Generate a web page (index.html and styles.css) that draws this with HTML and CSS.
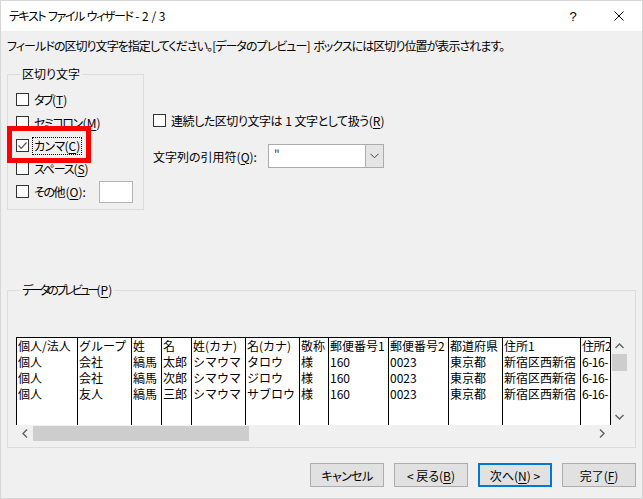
FILE: index.html
```html
<!DOCTYPE html>
<html lang="ja">
<head>
<meta charset="utf-8">
<title>テキスト ファイル ウィザード</title>
<link rel="stylesheet" href="styles.css">
</head>
<body>
<div class="window">
  <div class="titlebar">
    <span class="title"><span class="k14">テキスト</span> <span class="k14">ファイル</span> <span class="k14">ウィザード</span> - 2 / 3</span>
    <span class="tbtn help">?</span>
    <span class="tbtn close"><svg width="10" height="10" viewBox="0 0 10 10"><path d="M0.5 0.5 L9.5 9.5 M9.5 0.5 L0.5 9.5" stroke="#000" stroke-width="1" fill="none"/></svg></span>
  </div>
  <div class="content">
    <p class="instr">フィールドの区切り文字を指定してください。[データのプレビュー] ボックスには区切り位置が表示されます。</p>
    <div class="top">
      <div class="group delims">
        <div class="legend">区切り文字</div>
        <div class="crow"><span class="cb"></span><span class="lbl"><span class="k15">タブ</span>(<u>T</u>)</span></div>
        <div class="crow"><span class="cb"></span><span class="lbl"><span class="k15 tail">セミコロン</span>(<u>M</u>)</span></div>
        <div class="crow"><span class="cb checked"><svg width="11" height="11" viewBox="0 0 11 11"><path d="M1.5 5.5 L4.2 8.3 L9.5 2.5" stroke="#555" stroke-width="1.2" fill="none"/></svg></span><span class="lbl focus"><span class="k07">カンマ</span>(<u>C</u>)</span></div>
        <div class="crow"><span class="cb"></span><span class="lbl"><span class="k12">スペース</span>(<u>S</u>)</span></div>
        <div class="crow"><span class="cb"></span><span class="lbl"><span class="k15">その</span>他(<u>O</u>):</span><span class="tbox"></span></div>
        <div class="redmark"></div>
      </div>
      <div class="options">
        <div class="crow"><span class="cb"></span><span class="lbl"><span class="renzoku">連続した区切り文字は 1 文字として扱う</span>(<u>R</u>)</span></div>
        <div class="qrow">
          <span class="qlbl">文字列の引用符(<u>Q</u>):</span>
          <span class="combo"><span class="cval">"</span><span class="cdrop"><svg width="9" height="6" viewBox="0 0 9 6"><path d="M0.5 0.8 L4.5 4.8 L8.5 0.8" stroke="#444" stroke-width="1" fill="none"/></svg></span></span>
        </div>
      </div>
    </div>
    <div class="group preview">
      <div class="legend"><span class="k28">データのプレビュー</span>(<u>P</u>)</div>
      <div class="pbox">
        <div class="data">
          <div class="col w61"><div>個人/法人</div><div>個人</div><div>個人</div><div>個人</div></div>
          <div class="col w54"><div>グループ</div><div>会社</div><div>会社</div><div>友人</div></div>
          <div class="col w30"><div>姓</div><div>縞馬</div><div>縞馬</div><div>縞馬</div></div>
          <div class="col w30"><div>名</div><div>太郎</div><div>次郎</div><div>三郎</div></div>
          <div class="col w54"><div>姓(カナ)</div><div>シマウマ</div><div>シマウマ</div><div>シマウマ</div></div>
          <div class="col w54"><div>名(カナ)</div><div>タロウ</div><div>ジロウ</div><div>サブロウ</div></div>
          <div class="col w29"><div>敬称</div><div>様</div><div>様</div><div>様</div></div>
          <div class="col w60"><div>郵便番号1</div><div>160</div><div>160</div><div>160</div></div>
          <div class="col w60"><div>郵便番号2</div><div>0023</div><div>0023</div><div>0023</div></div>
          <div class="col w54"><div>都道府県</div><div>東京都</div><div>東京都</div><div>東京都</div></div>
          <div class="col w78"><div>住所1</div><div>新宿区西新宿</div><div>新宿区西新宿</div><div>新宿区西新宿</div></div>
          <div class="col last"><div>住所2</div><div>6-16-</div><div>6-16-</div><div>6-16-</div></div>
        </div>
        <div class="vscroll">
          <span class="arr"><svg width="9" height="6" viewBox="0 0 9 6"><path d="M0.5 5 L4.5 1 L8.5 5" stroke="#606060" stroke-width="1.4" fill="none"/></svg></span>
          <span class="vthumb"></span>
          <span class="vfill"></span>
          <span class="arr"><svg width="9" height="6" viewBox="0 0 9 6"><path d="M0.5 1 L4.5 5 L8.5 1" stroke="#606060" stroke-width="1.4" fill="none"/></svg></span>
        </div>
        <div class="hscroll">
          <span class="harr"><svg width="6" height="9" viewBox="0 0 6 9"><path d="M5 0.5 L1 4.5 L5 8.5" stroke="#606060" stroke-width="1.4" fill="none"/></svg></span>
          <span class="hthumb"></span>
          <span class="hfill"></span>
          <span class="harr"><svg width="6" height="9" viewBox="0 0 6 9"><path d="M1 0.5 L5 4.5 L1 8.5" stroke="#606060" stroke-width="1.4" fill="none"/></svg></span>
        </div>
        <div class="corner"></div>
      </div>
    </div>
    <div class="buttons">
      <button class="btn"><span class="k06">キャンセル</span></button>
      <button class="btn">&lt; 戻る(<u>B</u>)</button>
      <button class="btn default">次へ(<u>N</u>) &gt;</button>
      <button class="btn">完了(<u>F</u>)</button>
    </div>
  </div>
</div>
</body>
</html>
```

FILE: styles.css
```css
* { box-sizing: border-box; }
html, body { margin: 0; padding: 0; }
body {
  font-family: "Noto Sans CJK JP", "Noto Sans", sans-serif;
  font-size: 12px;
  color: #000;
  background: #f0f0f0;
}
u { text-decoration: underline; text-underline-offset: 2px; }
.window {
  width: 643px;
  height: 499px;
  border: 1px solid #d6d6d6;
  background: #f0f0f0;
  display: flex;
  flex-direction: column;
  overflow: hidden;
}
.titlebar {
  height: 30px;
  background: #fff;
  display: flex;
  align-items: center;
  padding-left: 8px;
  flex: none;
}
.title { flex: 1; font-feature-settings: "palt"; line-height: 16px; white-space: pre; }
.tbtn {
  width: 46px;
  height: 30px;
  display: flex;
  align-items: center;
  justify-content: center;
  font-size: 13px;
}
.help { font-family: "Liberation Sans", sans-serif; }
.content { padding: 0 5px 0 6px; flex: 1; display: flex; flex-direction: column; }
.instr {
  margin: 7px 0 0 0;
  line-height: 16px;
  font-feature-settings: "palt";
  letter-spacing: -0.95px;
  word-spacing: 2px;
  white-space: nowrap;
}
.k06 { letter-spacing: -0.6px; }
.k07 { letter-spacing: -0.7px; }
.k12 { letter-spacing: -1.2px; }
.k14 { letter-spacing: -1.4px; }
.k15 { letter-spacing: -1.5px; }
.k28 { letter-spacing: -2.8px; }
.tail { padding-right: 1px; }
.renzoku { letter-spacing: -0.45px; word-spacing: 0.9px; }
.top { display: flex; margin-top: 20px; }
.group {
  border: 1px solid #dcdcdc;
  position: relative;
}
.legend {
  display: table;
  margin: -9px 0 0 4px;
  padding: 0 2px;
  line-height: 16px;
  background: #f0f0f0;
  font-feature-settings: "palt";
  white-space: nowrap;
}
.delims {
  width: 137px;
  height: 136px;
  padding-left: 8px;
}
.delims .legend { margin-bottom: 6px; }
.crow {
  height: 23px;
  display: flex;
  align-items: center;
  white-space: nowrap;
}
.cb {
  width: 13px;
  height: 13px;
  border: 1px solid #333;
  background: #fff;
  flex: none;
  display: flex;
  align-items: center;
  justify-content: center;
}
.lbl {
  margin-left: 3px;
  padding: 0 1px;
  line-height: 16px;
  font-feature-settings: "palt";
  border: 1px solid transparent;
}
.lbl.focus { border: 1px dotted #000; }
.tbox {
  width: 34px;
  height: 22px;
  margin-left: 11px;
  background: #fff;
  border: 1px solid #b4b4b4;
}
.redmark {
  position: absolute;
  left: -1px;
  top: 51px;
  width: 84px;
  height: 37px;
  border: 5px solid #ff0000;
}
.options {
  padding-top: 35px;
  margin-left: 9px;
}
.qrow {
  display: flex;
  align-items: center;
  margin-top: 12px;
  height: 24px;
}
.qlbl { font-feature-settings: "palt"; width: 115px; }
.combo {
  width: 116px;
  height: 24px;
  background: #fff;
  border: 1px solid #acacac;
  display: flex;
}
.cval { flex: 1; padding-left: 5px; line-height: 20px; color: #4b2170; }
.cdrop {
  width: 18px;
  background: #e5e5e5;
  border-left: 1px solid #acacac;
  display: flex;
  align-items: center;
  justify-content: center;
}
.preview {
  margin-top: 80px;
  width: 629px;
  height: 158px;
  padding-left: 8px;
}
.preview .legend { margin-bottom: 39px; }
.pbox {
  width: 611px;
  height: 105px;
  display: grid;
  grid-template-columns: 594px 17px;
  grid-template-rows: 88px 17px;
  background: #fff;
}
.data {
  display: flex;
  overflow: hidden;
  border-top: 1px solid #000;
  font-family: "Noto Sans CJK JP", sans-serif;
  font-size: 12px;
  background: #fff;
}
.col {
  flex: none;
  border-left: 1px solid #000;
  padding-left: 1px;
  overflow: hidden;
  white-space: nowrap;
}
.col div { line-height: 16px; height: 16px; }
.col.last { flex: 1; letter-spacing: -0.5px; }
.w29 { width: 29px; } .w30 { width: 30px; } .w54 { width: 54px; }
.w60 { width: 60px; } .w61 { width: 61px; } .w78 { width: 78px; }
.vscroll {
  display: flex;
  flex-direction: column;
  align-items: center;
  background: #f0f0f0;
  border-left: 1px solid #000;
}
.arr { height: 17px; display: flex; align-items: center; justify-content: center; width: 100%; }
.vthumb { width: 15px; height: 17px; background: #cdcdcd; }
.vfill { flex: 1; }
.hscroll {
  display: flex;
  align-items: center;
  background: #f0f0f0;
}
.harr { width: 17px; height: 100%; display: flex; align-items: center; justify-content: center; }
.hthumb { width: 216px; height: 15px; background: #cdcdcd; }
.hfill { flex: 1; }
.corner { background: #f0f0f0; }
.buttons {
  display: flex;
  justify-content: flex-end;
  gap: 10px;
  margin-top: 15px;
  padding-right: 1px;
}
.btn {
  width: 74px;
  height: 24px;
  background: #e1e1e1;
  border: 1px solid #adadad;
  font-family: "Noto Sans CJK JP", sans-serif;
  font-size: 12px;
  padding: 0;
  color: #000;
  font-feature-settings: "palt";
}
.btn.default { border: 2px solid #0078d7; }
```
